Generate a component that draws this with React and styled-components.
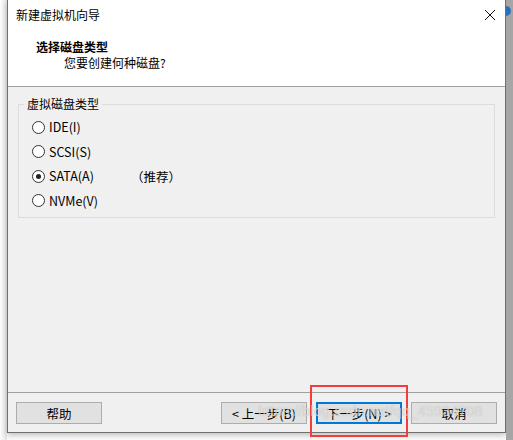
import React from "react";
import styled, { createGlobalStyle } from "styled-components";

const Global = createGlobalStyle`
  html, body {
    margin: 0;
    padding: 0;
    background: #fbfbfb;
  }
  body {
    font-family: "Noto Sans CJK SC", "Noto Sans", sans-serif;
    font-size: 12px;
    color: #000;
  }
`;

const Page = styled.div`
  display: flex;
  width: 513px;
  height: 440px;
  overflow: hidden;
  position: relative;
`;

const LeftStrip = styled.div`
  width: 7px;
  background: linear-gradient(to right, #fdfdfd, #e6e6e6);
`;

const Desktop = styled.div`
  flex: 1;
  background: #a6a6a6;
  position: relative;
`;

const DesktopIcon = styled.div`
  position: absolute;
  left: 0;
  top: 6px;
  width: 5px;
  height: 10px;
  border-radius: 0 5px 5px 0;
  background: #2a6fb8;
`;

const Window = styled.div`
  width: 497px;
  height: 432px;
  display: flex;
  flex-direction: column;
  border: 1px solid #6f6f6f;
  border-top: none;
  background: #f0f0f0;
  box-shadow: 0 2px 6px rgba(0, 0, 0, 0.25);
`;

const TitleBar = styled.div`
  height: 30px;
  display: flex;
  align-items: center;
  justify-content: space-between;
  padding: 0 0 0 8px;
  background: #fff;
`;

const TitleText = styled.span`
  font-size: 12px;
  line-height: 14px;
`;

const CloseBtn = styled.div`
  width: 30px;
  display: flex;
  justify-content: center;
  align-items: center;
`;

const Header = styled.div`
  height: 57px;
  background: #fff;
  border-bottom: 1px solid #a0a0a0;
  padding: 9px 0 0 28px;
  box-sizing: border-box;
`;

const Heading = styled.div`
  font-weight: bold;
  font-size: 12px;
  line-height: 16px;
`;

const SubHeading = styled.div`
  font-size: 12px;
  line-height: 16px;
  padding-left: 28px;
`;

const Body = styled.div`
  flex: 1;
  padding: 17px 10px 0 10px;
`;

const Group = styled.fieldset`
  margin: 0;
  height: 114px;
  box-sizing: border-box;
  border: 1px solid #dcdcdc;
  padding: 4px 0 0 13px;
  display: flex;
  flex-direction: column;
  position: relative;
`;

const Legend = styled.legend`
  position: absolute;
  top: -9px;
  left: 5px;
  padding: 0 3px;
  background: #f0f0f0;
  font-size: 12px;
  line-height: 16px;
`;

const RadioRow = styled.label`
  display: flex;
  align-items: center;
  height: 24.5px;
  gap: 4px;
  font-size: 12.5px;
  margin-top: ${(p) => (p.$first ? "6px" : "0")};
`;

const RadioCircle = styled.span`
  width: 11px;
  height: 11px;
  border: 1px solid #333;
  border-radius: 50%;
  background: #fff;
  display: flex;
  align-items: center;
  justify-content: center;
  flex-shrink: 0;
  &::after {
    content: "";
    display: ${(p) => (p.$checked ? "block" : "none")};
    width: 5px;
    height: 5px;
    border-radius: 50%;
    background: #222;
  }
`;

const RadioLabel = styled.span`
  line-height: 14px;
  width: ${(p) => (p.$wide ? "78px" : "auto")};
`;

const Footer = styled.div`
  height: 40px;
  border-top: 1px solid #a0a0a0;
  display: flex;
  align-items: flex-start;
  padding: 9px 8px 0 8px;
  box-sizing: border-box;
`;

const Spacer = styled.div`
  flex: 1;
`;

const Button = styled.div`
  width: 86px;
  height: 22px;
  box-sizing: border-box;
  border: 1px solid ${(p) => (p.$primary ? "#0078d7" : "#adadad")};
  box-shadow: ${(p) => (p.$primary ? "inset 0 0 0 1px #0078d7" : "none")};
  background: #e1e1e1;
  display: flex;
  align-items: center;
  justify-content: center;
  font-size: 12.5px;
  margin-left: ${(p) => (p.$gap ? "9px" : "0")};
`;

const Highlight = styled.div`
  position: absolute;
  left: 310px;
  top: 385px;
  width: 98px;
  height: 52px;
  box-sizing: border-box;
  border: 2px solid #f23d3d;
  pointer-events: none;
`;

const Watermark = styled.div`
  position: absolute;
  left: 258px;
  top: 403px;
  font-family: "Liberation Sans", sans-serif;
  font-size: 14px;
  letter-spacing: 0.3px;
  color: rgba(255, 255, 255, 0.55);
  text-shadow: 0 0 1px rgba(120, 120, 120, 0.5);
  pointer-events: none;
  white-space: nowrap;
`;

const options = [
  { label: "IDE(I)" },
  { label: "SCSI(S)" },
  { label: "SATA(A)", checked: true, note: "（推荐）" },
  { label: "NVMe(V)" },
];

export default function App() {
  return (
    <>
      <Global />
      <Page>
        <LeftStrip />
        <Window>
          <TitleBar>
            <TitleText>新建虚拟机向导</TitleText>
            <CloseBtn>
              <svg width="12" height="12" viewBox="0 0 12 12">
                <path d="M1 1L11 11M11 1L1 11" stroke="#111" strokeWidth="1" />
              </svg>
            </CloseBtn>
          </TitleBar>
          <Header>
            <Heading>选择磁盘类型</Heading>
            <SubHeading>您要创建何种磁盘?</SubHeading>
          </Header>
          <Body>
            <Group>
              <Legend>虚拟磁盘类型</Legend>
              {options.map((o, i) => (
                <RadioRow key={o.label} $first={i === 0}>
                  <RadioCircle $checked={o.checked} />
                  <RadioLabel $wide={!!o.note}>{o.label}</RadioLabel>
                  {o.note && <span>{o.note}</span>}
                </RadioRow>
              ))}
            </Group>
          </Body>
          <Footer>
            <Button>帮助</Button>
            <Spacer />
            <Button>&lt; 上一步(B)</Button>
            <Button $gap $primary>下一步(N) &gt;</Button>
            <Button $gap>取消</Button>
          </Footer>
        </Window>
        <Desktop>
          <DesktopIcon />
        </Desktop>
        <Highlight />
        <Watermark>https://blog.csdn.net/qq_45934708</Watermark>
      </Page>
    </>
  );
}
